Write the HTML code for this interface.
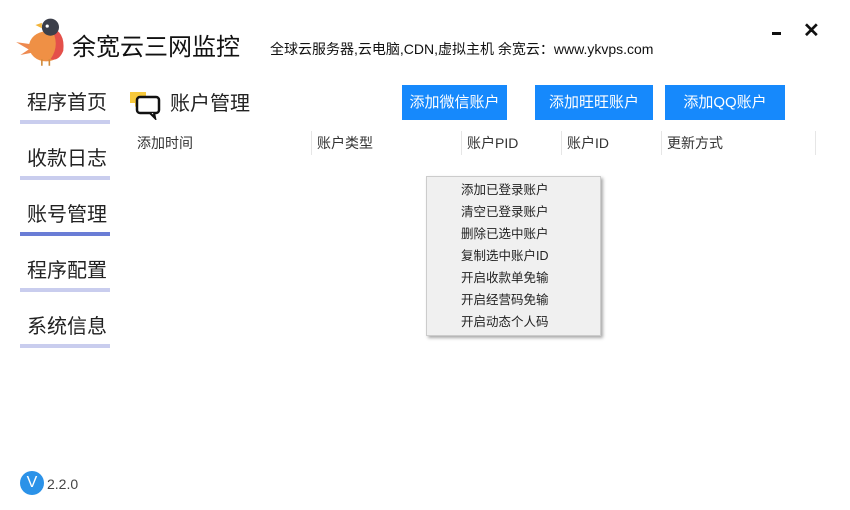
<!DOCTYPE html>
<html><head><meta charset="utf-8"><style>
*{margin:0;padding:0;box-sizing:border-box}
body{width:850px;height:510px;background:#fff;position:relative;overflow:hidden;font-family:"Liberation Sans","Noto Sans CJK SC",sans-serif;color:#222}
.a{position:absolute;white-space:nowrap}
.nav{position:absolute;left:20px;width:90px;font-size:20px;color:#222;padding-left:7px;line-height:26px}
.nav i{position:absolute;left:0;top:30px;width:90px;height:4px;background:#c9cdee}
.btn{position:absolute;top:85px;height:35px;background:#1689fc;color:#fff;font-size:15px;line-height:35px;text-align:center}
.th{position:absolute;top:134px;font-size:14px;line-height:18px;color:#333}
.sep{position:absolute;top:131px;width:1px;height:24px;background:#e6e6e6}
.menu{position:absolute;left:426px;top:176px;width:175px;height:160px;background:#f0f0f0;border:1px solid #ccc;box-shadow:2px 2px 3px #aaa}
.menu div{position:absolute;left:34px;font-size:12.5px;line-height:16px;color:#222}
</style></head><body>
<svg class="a" style="left:14px;top:14px" width="60" height="52" viewBox="0 0 56 48">
<path d="M2 26 L16 28 L14 33 Z" fill="#ee8a50"/>
<path d="M6 38 L18 30 L16 36 Z" fill="#ee8a50"/>
<ellipse cx="30" cy="30" rx="16" ry="14" fill="#ef9045"/>
<path d="M34 12 Q48 16 46 34 Q42 44 34 42 Q44 28 34 12Z" fill="#e4504a"/>
<circle cx="34" cy="12" r="8" fill="#3c3f4a"/>
<path d="M26 8 L20 10 L26 13Z" fill="#f2b43a"/>
<circle cx="31" cy="11" r="1.5" fill="#fff"/>
<path d="M26 42 L26 48 M33 42 L33 48" stroke="#d08a3a" stroke-width="1.5"/>
</svg>
<div class="a" style="left:72px;top:33px;font-size:24px;line-height:30px;color:#111">余宽云三网监控</div>
<div class="a" style="left:270px;top:40px;font-size:14px;line-height:18px;color:#111">全球云服务器,云电脑,CDN,虚拟主机 余宽云：www.ykvps.com</div>
<div class="a" style="left:772px;top:32px;width:9px;height:3px;background:#111"></div>
<div class="a" style="left:803px;top:18px;font-size:20px;font-weight:bold;color:#111">✕</div>

<div class="nav" style="top:90px">程序首页<i></i></div>
<div class="nav" style="top:146px">收款日志<i></i></div>
<div class="nav" style="top:202px">账号管理<i style="background:#6a7dd6"></i></div>
<div class="nav" style="top:258px">程序配置<i></i></div>
<div class="nav" style="top:314px">系统信息<i></i></div>

<svg class="a" style="left:130px;top:92px" width="34" height="28" viewBox="0 0 34 28">
<rect x="0" y="0" width="16" height="11" fill="#f7c93b"/>
<path d="M5 11 L5 15 L9 11Z" fill="#f7c93b"/>
<rect x="7" y="5" width="22" height="16" rx="3" fill="#fff" stroke="#111" stroke-width="2.5"/>
<path d="M20 21 L25 26 L24 21" fill="#fff" stroke="#111" stroke-width="2.2"/>
</svg>
<div class="a" style="left:170px;top:91px;font-size:20px;line-height:26px;color:#222">账户管理</div>

<div class="btn" style="left:402px;width:105px">添加微信账户</div>
<div class="btn" style="left:535px;width:118px">添加旺旺账户</div>
<div class="btn" style="left:665px;width:120px">添加QQ账户</div>

<div class="th" style="left:137px">添加时间</div>
<div class="sep" style="left:311px"></div><div class="th" style="left:317px">账户类型</div>
<div class="sep" style="left:461px"></div><div class="th" style="left:467px">账户PID</div>
<div class="sep" style="left:561px"></div><div class="th" style="left:567px">账户ID</div>
<div class="sep" style="left:661px"></div><div class="th" style="left:667px">更新方式</div>
<div class="sep" style="left:815px"></div>

<div class="menu">
<div style="top:5px">添加已登录账户</div>
<div style="top:27px">清空已登录账户</div>
<div style="top:49px">删除已选中账户</div>
<div style="top:71px">复制选中账户ID</div>
<div style="top:93px">开启收款单免输</div>
<div style="top:115px">开启经营码免输</div>
<div style="top:137px">开启动态个人码</div>
</div>

<div class="a" style="left:20px;top:471px;width:24px;height:24px;border-radius:50%;background:#2b92e8;color:#fff;font-size:16px;line-height:24px;text-align:center">V</div>
<div class="a" style="left:47px;top:475px;font-size:14px;line-height:18px;color:#444">2.2.0</div>
</body></html>
